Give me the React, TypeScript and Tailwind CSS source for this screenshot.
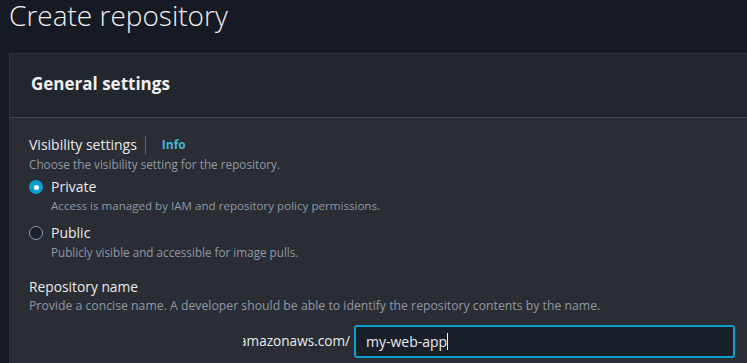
import React from "react";

export default function App() {
  return (
    <div
      className="w-[747px] h-[363px] overflow-hidden bg-[#161a22] text-[#e9ebed]"
      style={{ fontFamily: '"Open Sans", "Noto Sans", Arial, sans-serif' }}
    >
      <h1 className="pl-[9px] pt-0 text-[28px] leading-[31px] font-light text-[#eef0f2]">
        Create repository
      </h1>
      <div className="mt-[22px] ml-[9px] w-[760px] border-l border-t border-[#2f343b] bg-[#2a2d33]">
        <div className="h-[64px] bg-[#22262d] border-b border-[#414750] flex items-center pl-[21px] pb-[3px]">
          <h2 className="text-[17px] font-bold text-[#eef0f2] leading-[22px]">General settings</h2>
        </div>
        <div className="pl-[19px] pt-[17px] pb-[20px]">
          <div className="flex items-center h-[20px]">
            <span className="text-[14px] leading-[20px]">Visibility settings</span>
            <span className="mx-[8px] h-[18px] w-px bg-[#5f6b7a]" />
            <span className="ml-[8px] text-[12px] font-bold text-[#42b4d9]">Info</span>
          </div>
          <div className="text-[11.75px] leading-[16px] text-[#8d99a8] mt-[1px]">
            Choose the visibility setting for the repository.
          </div>
          <div className="mt-[5px] flex flex-col gap-[8px]">
            <div className="flex">
              <div className="w-[14px] h-[14px] mt-[3px] rounded-full bg-[#0a9fce] flex items-center justify-center">
                <div className="w-[5px] h-[5px] rounded-full bg-white" />
              </div>
              <div className="ml-[8px]">
                <div className="text-[14px] leading-[20px]">Private</div>
                <div className="text-[11.6px] leading-[18px] text-[#8d99a8]">
                  Access is managed by IAM and repository policy permissions.
                </div>
              </div>
            </div>
            <div className="flex">
              <div className="w-[14px] h-[14px] mt-[3px] rounded-full border-[1.5px] border-[#8d99a8] bg-[#1b212b]" />
              <div className="ml-[8px]">
                <div className="text-[14px] leading-[20px]">Public</div>
                <div className="text-[11.7px] leading-[18px] text-[#8d99a8]">
                  Publicly visible and accessible for image pulls.
                </div>
              </div>
            </div>
          </div>
          <div className="mt-[16px] text-[13.8px] leading-[20px]">Repository name</div>
          <div className="text-[12.25px] leading-[18px] text-[#8d99a8]">
            Provide a concise name. A developer should be able to identify the repository contents by the name.
          </div>
          <div className="mt-[10px] flex items-center">
            <div className="ml-[214px] w-[107px] overflow-hidden flex justify-end whitespace-nowrap text-[13.6px]">
              <span>123456789012.dkr.ecr.us-east-1.amazonaws.com/</span>
            </div>
            <div className="ml-[4px] w-[381px] h-[33px] rounded-[3px] border-2 border-[#0a9fce] bg-[#192029] flex items-center pl-[10px] text-[14px]">
              <span>my-web-app</span>
              <span className="w-px h-[17px] bg-white" />
            </div>
          </div>
        </div>
      </div>
    </div>
  );
}
